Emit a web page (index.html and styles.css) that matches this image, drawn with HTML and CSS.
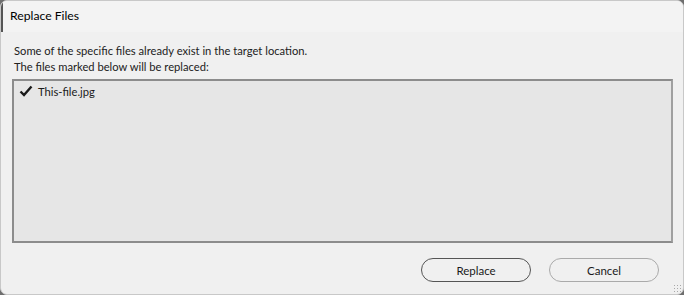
FILE: index.html
```html
<!DOCTYPE html>
<html lang="en">
<head>
    <meta charset="UTF-8">
    <title>Replace Files</title>
    <link rel="stylesheet" href="styles.css">
</head>
<body>
    <div class="dialog">
        <div class="title-bar">Replace Files</div>
        <div class="content">
            <p class="message">Some of the specific files already exist in the target location.<br>The files marked below will be replaced:</p>
            <ul class="file-list">
                <li class="file-item">
                    <svg class="check" width="14" height="12" viewBox="0 0 14 12">
                        <path d="M1.5 6.5 L5 10 L12.5 1.5" fill="none" stroke="#1a1a1a" stroke-width="2.4"/>
                    </svg>
                    <span>This-file.jpg</span>
                </li>
            </ul>
            <div class="buttons">
                <button class="btn btn-default">Replace</button>
                <button class="btn">Cancel</button>
            </div>
        </div>
        <div class="grip"></div>
    </div>
</body>
</html>
```

FILE: styles.css
```css
html, body {
    margin: 0;
    height: 100%;
}
body {
    font-family: "Segoe UI", Lato, "Noto Sans", sans-serif;
    font-size: 11.2px;
    color: #1a1a1a;
    background: #6e6e6e;
}
.dialog {
    position: relative;
    box-sizing: border-box;
    height: 295px;
    background: #f0f0f0;
    border: 1px solid #c8c8c8;
    border-radius: 7px;
    overflow: hidden;
}
.title-bar {
    height: 31px;
    line-height: 30px;
    padding-left: 7px;
    font-size: 12.2px;
    color: #000;
    border-left: 2px solid #555;
    background: #f3f3f3;
}
.content {
    padding: 11px 10px 0 11px;
}
.message {
    margin: 0 0 0 2px;
    line-height: 16px;
    color: #222;
}
.file-list {
    list-style: none;
    margin: 4px 0 0;
    padding: 1px 5px;
    height: 158px;
    background: #e6e6e6;
    border: 2px solid #8c8c8c;
    border-right-color: #a0a0a0;
}
.file-item {
    display: flex;
    align-items: center;
    gap: 5px;
    height: 18px;
}
.check {
    flex: none;
}
.buttons {
    display: flex;
    justify-content: flex-end;
    gap: 18px;
    margin-top: 15px;
    padding-right: 14px;
}
.btn {
    width: 110px;
    height: 24px;
    font-family: inherit;
    font-size: 11.5px;
    color: #1a1a1a;
    background: #f0f0f0;
    border: 1px solid #aaa;
    border-radius: 12px;
    padding: 0;
}
.btn-default {
    border-color: #555;
}
.grip {
    position: absolute;
    right: 2px;
    bottom: 2px;
    width: 8px;
    height: 8px;
    background-image: radial-gradient(circle, #a8a8a8 0.8px, transparent 1px);
    background-size: 3px 3px;
}
```
